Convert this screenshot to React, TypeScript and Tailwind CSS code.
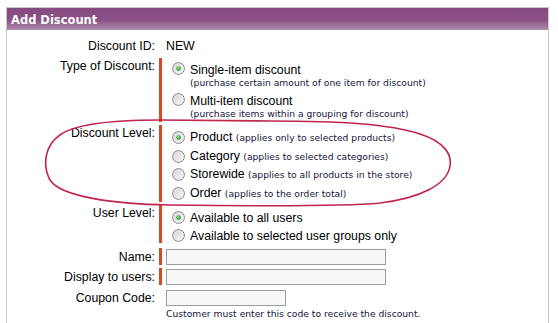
import React from "react";

const small = "font-['DejaVu_Sans',Verdana,sans-serif] text-[9.2px] text-[#14143a]";

function Radio({ checked = false }: { checked?: boolean }) {
  return (
    <svg width="13" height="13" viewBox="0 0 13 13" className="shrink-0 block">
      <defs>
        <linearGradient id="rfill" x1="0" y1="0" x2="1" y2="1">
          <stop offset="0" stopColor="#cfcfcf" />
          <stop offset="1" stopColor="#fbfbfb" />
        </linearGradient>
        <radialGradient id="rdot" cx="0.45" cy="0.4" r="0.6">
          <stop offset="0" stopColor="#a6ec9c" />
          <stop offset="0.5" stopColor="#4cbb45" />
          <stop offset="1" stopColor="#2a8a2a" />
        </radialGradient>
      </defs>
      <circle cx="6.5" cy="6.5" r="5.9" fill="url(#rfill)" stroke="#858585" strokeWidth="1" />
      <circle cx="6.5" cy="6.5" r="4.6" fill="none" stroke="#f4f4f4" strokeWidth="0.8" opacity="0.7" />
      {checked && <circle cx="6.5" cy="6.5" r="2.3" fill="url(#rdot)" />}
    </svg>
  );
}

function Row({
  label,
  bar = true,
  className = "",
  labelClass = "",
  children,
}: {
  label: string;
  bar?: boolean;
  className?: string;
  labelClass?: string;
  children: React.ReactNode;
}) {
  return (
    <div className={`flex ${className}`}>
      <div className={`w-[148px] shrink-0 text-right leading-[16px] ${labelClass}`}>{label}</div>
      <div className={`w-[3px] ml-[4px] self-stretch shrink-0 ${bar ? "bg-[#de4622]" : ""}`} />
      <div className="ml-[4px] flex-1 min-w-0">{children}</div>
    </div>
  );
}

function TwoLineOption({ checked, title, note, className = "" }: { checked?: boolean; title: string; note: string; className?: string }) {
  return (
    <div className={`flex items-start ${className}`}>
      <div className="ml-[6px] mt-[0px]">
        <Radio checked={checked} />
      </div>
      <div className="ml-[5px]">
        <div className="leading-[16px]">{title}</div>
        <div className={`${small} leading-[10px] whitespace-nowrap`}>{note}</div>
      </div>
    </div>
  );
}

function LineOption({ checked, title, note, h = "h-[18.7px]" }: { checked?: boolean; title: string; note?: string; h?: string }) {
  return (
    <div className={`flex items-center ${h}`}>
      <div className="ml-[6px]">
        <Radio checked={checked} />
      </div>
      <div className="ml-[5px] leading-[16px] whitespace-nowrap">
        {title}
        {note && (
          <>
            {" "}
            <span className={small}>{note}</span>
          </>
        )}
      </div>
    </div>
  );
}

export default function App() {
  return (
    <div className="relative w-[558px] h-[323px] overflow-hidden bg-white text-black font-['Liberation_Sans',Arial,sans-serif] text-[12.3px]">
      <div className="ml-[6px] mt-[7px] w-[543px] h-[360px] border border-[#cacaca]">
        <div className="h-[22px] pl-[4px] pt-[1px] flex items-center bg-[linear-gradient(to_bottom,#864980_0%,#8b5186_55%,#ae8dab_100%)]">
          <span className="text-white font-bold font-['DejaVu_Sans',Verdana,sans-serif] text-[11.5px] leading-[16px]">
            Add Discount
          </span>
        </div>
        <div className="pt-[8px]">
          <Row label="Discount ID:" bar={false} className="h-[16px]">
            <div className="leading-[16px]">NEW</div>
          </Row>
          <Row label="Type of Discount:" className="mt-[4px] h-[64px]">
            <div className="pt-[4px]">
              <TwoLineOption
                checked
                title="Single-item discount"
                note="(purchase certain amount of one item for discount)"
              />
              <TwoLineOption
                className="mt-[5px]"
                title="Multi-item discount"
                note="(purchase items within a grouping for discount)"
              />
            </div>
          </Row>
          <Row label="Discount Level:" className="mt-[3px] h-[77px]">
            <div className="pt-[3px]">
              <LineOption checked title="Product" note="(applies only to selected products)" />
              <LineOption title="Category" note="(applies to selected categories)" />
              <LineOption title="Storewide" note="(applies to all products in the store)" />
              <LineOption title="Order" note="(applies to the order total)" />
            </div>
          </Row>
          <Row label="User Level:" className="mt-[3px] h-[38px]">
            <div className="pt-[3.5px]">
              <LineOption checked title="Available to all users" h="h-[18px]" />
              <LineOption title="Available to selected user groups only" h="h-[18px]" />
            </div>
          </Row>
          <Row label="Name:" className="mt-[5px] h-[17px]" labelClass="pt-[1px]">
            <div className="mt-[1px] w-[220px] h-[16px] border border-[#9c9c9c] bg-[#f8f8f8]" />
          </Row>
          <Row label="Display to users:" className="mt-[3px] h-[17px]" labelClass="pt-[1px]">
            <div className="mt-[1px] w-[220px] h-[16px] border border-[#9c9c9c] bg-[#f8f8f8]" />
          </Row>
          <Row label="Coupon Code:" bar={false} className="mt-[4px] h-[17px]" labelClass="pt-[1px]">
            <div className="mt-[1px] w-[120px] h-[16px] border border-[#9c9c9c] bg-[#f8f8f8]" />
          </Row>
          <div className={`ml-[159px] mt-[3px] leading-[10px] ${small}`}>
            Customer must enter this code to receive the discount.
          </div>
        </div>
      </div>
      <svg className="absolute left-0 top-0 pointer-events-none" width="558" height="323" viewBox="0 0 558 323">
        <path
          d="M 270 121 C 340 121, 390 124, 420 134 C 445 142, 452 155, 450 166 C 447 185, 420 198, 380 203 C 340 207, 250 206, 170 205 C 110 204, 60 196, 50 180 C 42 165, 45 145, 60 135 C 75 124, 110 120, 160 120 L 270 121 Z"
          fill="none"
          stroke="#c0244f"
          strokeWidth="1.6"
        />
      </svg>
    </div>
  );
}
